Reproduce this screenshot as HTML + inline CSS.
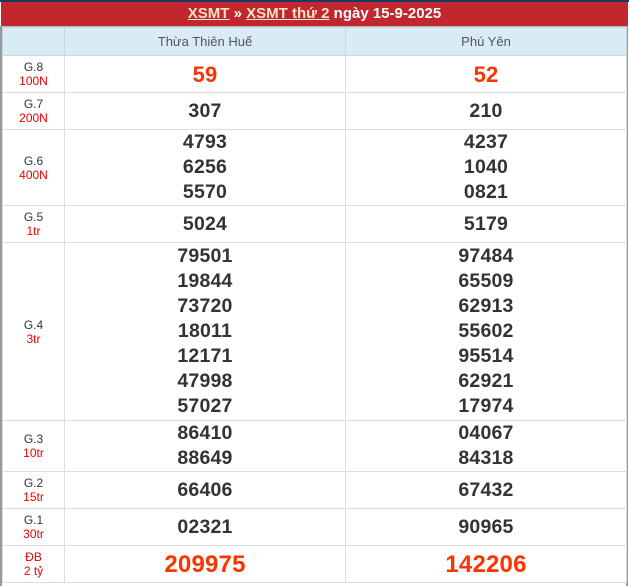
<!DOCTYPE html>
<html><head><meta charset="utf-8"><style>
*{margin:0;padding:0;box-sizing:border-box}
body{width:629px;height:577px;overflow:hidden;background:#fff;font-family:"Liberation Sans",Arial,sans-serif;position:relative}
#top{position:absolute;left:0;top:0;width:629px;height:2px;background:#1b3a6b}
#hd{position:absolute;left:1px;top:2px;width:627px;height:25px;background:#c1272d;color:#fff;font-weight:bold;font-size:15px;text-align:center;line-height:24px}
#hd u{color:#fbe4c8}
#box{position:absolute;left:0;top:26px;width:628px;height:560px;border-left:2px solid #999;border-right:2px solid #999;border-top:1px solid #bbb}
table{border-collapse:collapse;width:624px;table-layout:fixed}
td{border:1px solid #ddd;text-align:center;vertical-align:middle;color:#333}
tr.h td{background:#d9ecf5;color:#555;font-size:13px;height:28px;border-color:#c8d8e0}
td.l{font-size:12px;color:#333;line-height:14px}
td.l span{color:#e00}
td.n{font-weight:bold;font-size:19.5px;line-height:25px;letter-spacing:0.2px}
.r{color:#f30;font-size:22px!important}
</style></head><body>
<div id="top"></div>
<div id="hd"><u>XSMT</u> » <u>XSMT thứ 2</u> ngày 15-9-2025</div>
<div id="box"><table>
<colgroup><col style="width:62px"><col style="width:281px"><col style="width:281px"></colgroup>
<tr class="h"><td></td><td>Thừa Thiên Huế</td><td>Phú Yên</td></tr>
<tr style="height:37px"><td class="l">G.8<br><span>100N</span></td><td class="n r">59</td><td class="n r">52</td></tr>
<tr style="height:37px"><td class="l">G.7<br><span>200N</span></td><td class="n">307</td><td class="n">210</td></tr>
<tr style="height:76px"><td class="l">G.6<br><span>400N</span></td><td class="n">4793<br>6256<br>5570</td><td class="n">4237<br>1040<br>0821</td></tr>
<tr style="height:37px"><td class="l">G.5<br><span>1tr</span></td><td class="n">5024</td><td class="n">5179</td></tr>
<tr style="height:178px"><td class="l">G.4<br><span>3tr</span></td><td class="n">79501<br>19844<br>73720<br>18011<br>12171<br>47998<br>57027</td><td class="n">97484<br>65509<br>62913<br>55602<br>95514<br>62921<br>17974</td></tr>
<tr style="height:51px"><td class="l">G.3<br><span>10tr</span></td><td class="n">86410<br>88649</td><td class="n">04067<br>84318</td></tr>
<tr style="height:37px"><td class="l">G.2<br><span>15tr</span></td><td class="n">66406</td><td class="n">67432</td></tr>
<tr style="height:37px"><td class="l">G.1<br><span>30tr</span></td><td class="n">02321</td><td class="n">90965</td></tr>
<tr style="height:37px"><td class="l"><span>ĐB<br>2 tỷ</span></td><td class="n r" style="font-size:24px!important">209975</td><td class="n r" style="font-size:24px!important">142206</td></tr>
</table></div>
</body></html>
